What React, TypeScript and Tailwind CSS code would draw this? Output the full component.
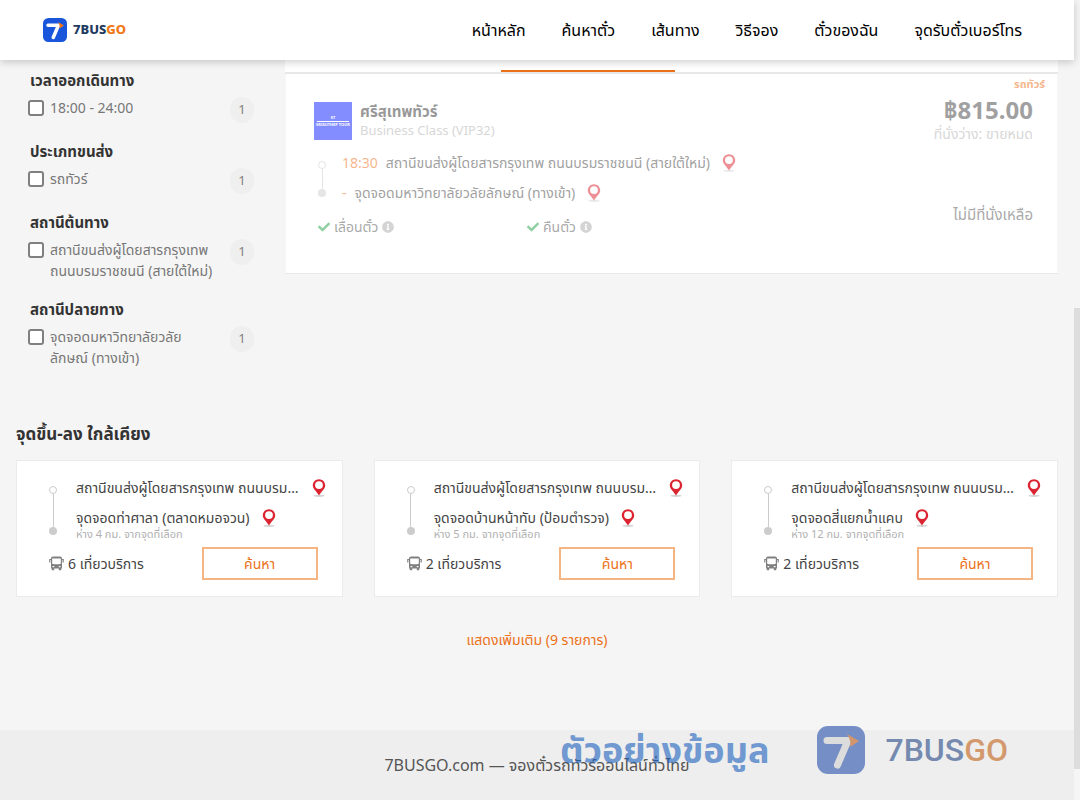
import { FaCheck, FaInfoCircle } from "react-icons/fa";

const NAV_ITEMS = ["หน้าหลัก", "ค้นหาตั๋ว", "เส้นทาง", "วิธีจอง", "ตั๋วของฉัน", "จุดรับตั๋วเบอร์โทร"];

const FILTERS = [
  { id: "time", title: "เวลาออกเดินทาง", label: "18:00 - 24:00", count: 1 },
  { id: "type", title: "ประเภทขนส่ง", label: "รถทัวร์", count: 1 },
  { id: "from", title: "สถานีต้นทาง", label: "สถานีขนส่งผู้โดยสารกรุงเทพ ถนนบรมราชชนนี (สายใต้ใหม่)", count: 1 },
  { id: "to", title: "สถานีปลายทาง", label: "จุดจอดมหาวิทยาลัยวลัยลักษณ์ (ทางเข้า)", count: 1 },
];

const ORIGIN = "สถานีขนส่งผู้โดยสารกรุงเทพ ถนนบรมราชชนนี (สายใต้ใหม่)";

const NEARBY = [
  { to: "จุดจอดท่าศาลา (ตลาดหมอจวน)", km: 4, trips: 6 },
  { to: "จุดจอดบ้านหน้าทับ (ป้อมตำรวจ)", km: 5, trips: 2 },
  { to: "จุดจอดสี่แยกน้ำแคบ", km: 12, trips: 2 },
];

function LogoMark({ className }: { className: string }) {
  return (
    <svg viewBox="0 0 48 48" className={className} aria-hidden="true">
      <rect width="48" height="48" rx="11" fill="#1a56db" />
      <path d="M10 14.500H31L20.500 39" fill="none" stroke="#fff" strokeWidth="7" strokeLinecap="round" strokeLinejoin="round" />
      <path d="M30 8l12 7-9 6c1-5 0-8-3-13z" fill="#f97316" />
    </svg>
  );
}

// same mark, toned down for the sample-data overlay
function FadedMark({ className }: { className: string }) {
  return (
    <svg viewBox="0 0 48 48" className={className} aria-hidden="true">
      <rect width="48" height="48" rx="11" fill="#758fc6" />
      <path d="M10 14.500H31L20.500 39" fill="none" stroke="#dcdcdc" strokeWidth="7" strokeLinecap="round" strokeLinejoin="round" />
      <path d="M30 8l12 7-9 6c1-5 0-8-3-13z" fill="#d3956c" />
    </svg>
  );
}

function Pin() {
  return (
    <svg viewBox="0 0 14 18" className="h-[18px] w-3.5 shrink-0" aria-hidden="true">
      <ellipse cx="7" cy="16.800" rx="5.500" ry="1.100" fill="#d4d4d4" />
      <path
        fillRule="evenodd"
        d="M7 0.200C3.500 0.200 0.800 3 0.800 6.400 0.800 9.900 4.600 12 7 16.600 9.400 12 13.200 9.900 13.200 6.400 13.200 3 10.500 0.200 7 0.200zM7 2.200a3.900 3.900 0 1 1 0 7.800 3.900 3.900 0 0 1 0-7.800z"
        fill="#dc2430"
      />
    </svg>
  );
}

function Bus() {
  return (
    <svg viewBox="0 0 15 15" className="h-[15px] w-[15px] shrink-0" aria-hidden="true">
      <path
        fillRule="evenodd"
        d="M4 0.500h7c1.200 0 2 .8 2 2V12.500h-.8v1.800h-2.400v-1.800H5.200v1.800H2.800v-1.800H2V2.500c0-1.200.8-2 2-2zM3.200 2.600v5.200c2 .7 6.600.7 8.600 0V2.600zM3.500 10v1.200h1.700V10zM9.800 10v1.200h1.700V10z"
        fill="#808080"
      />
      <path d="M2.200 3.500H.8V6.500M12.800 3.500h1.400V6.500" fill="none" stroke="#808080" strokeWidth="1.200" />
    </svg>
  );
}

function Timeline({ className }: { className: string }) {
  return (
    <div className={`flex w-2 shrink-0 flex-col items-center ${className}`}>
      <span className="size-2 rounded-full border border-[#cccccc] bg-white" />
      <span className="w-px flex-1 bg-[#cccccc]" />
      <span className="size-2 rounded-full bg-[#cccccc]" />
    </div>
  );
}

function Header() {
  return (
    <header className="relative z-10 flex h-[60px] items-center justify-between bg-white pr-[52px] pl-[43px] shadow-[0_2px_8px_rgba(0,0,0,0.2)]">
      <a href="#" className="flex items-center gap-1.5">
        <LogoMark className="size-6" />
        <span className="text-[13px] font-extrabold text-[#1e3a5f]">
          7BUS<span className="text-[#f07818]">GO</span>
        </span>
      </a>
      <nav className="flex gap-9 text-base leading-6 whitespace-nowrap text-black">
        {NAV_ITEMS.map((item) => (
          <a key={item} href="#">
            {item}
          </a>
        ))}
      </nav>
    </header>
  );
}

function Sidebar() {
  return (
    <aside className="flex w-[285px] shrink-0 flex-col gap-[17px] pt-2.5 pr-[31px] pl-7">
      {FILTERS.map((f) => (
        <section key={f.id}>
          <h3 className="pl-0.5 text-[15px] leading-5 font-bold text-[#333333]">{f.title}</h3>
          <div className="mt-[7px] flex min-h-[27px] items-start">
            <input
              id={f.id}
              type="checkbox"
              className="mt-[3px] size-4 shrink-0 appearance-none rounded-[3px] border-2 border-[#808080] bg-white"
            />
            <label htmlFor={f.id} className="ml-1.5 w-[168px] pb-px text-sm leading-[21px] text-[#777777]">
              {f.label}
            </label>
            <span className="ml-auto flex h-[26px] w-6 items-center justify-center rounded-full bg-[#efefef] text-[13px] text-[#808080]">
              {f.count}
            </span>
          </div>
        </section>
      ))}
    </aside>
  );
}

function TripCard() {
  return (
    <article className="mr-4 min-w-0 flex-1 border-b border-[#e8e8e8] bg-white">
      <div className="flex h-3 items-end">
        <span className="w-[28%]" />
        <span className="h-0.5 w-[22.5%] bg-[#ec7017]" />
      </div>
      <div className="h-0.5 bg-[#e8e8e8]" />
      <div className="border-x border-[#eeeeee] opacity-50">
        <p className="px-3 text-right text-[11px] leading-5 font-bold text-[#ec7017]">รถทัวร์</p>
        <div className="flex justify-between pr-6 pb-9 pl-7">
          <div className="pt-2">
            <div className="flex gap-2">
              <div className="flex size-[38px] flex-col items-center justify-center bg-[#0a1eff] text-[4px] leading-[6px] font-bold whitespace-nowrap text-white">
                <span>ST</span>
                <span className="h-px w-8 bg-white" />
                <span>SRISUTHEP TOUR</span>
              </div>
              <div className="leading-[19px]">
                <h2 className="text-[15px] font-bold text-[#333333]">ศรีสุเทพทัวร์</h2>
                <p className="text-[13px] text-[#b0b0b0]">Business Class (VIP32)</p>
              </div>
            </div>
            <div className="mt-[13px] flex pl-1">
              <Timeline className="mt-2 mb-1.5" />
              <div className="ml-4 flex flex-col gap-2.5 text-sm leading-5 text-[#444444]">
                <p className="flex items-center gap-2">
                  <span className="text-[#ec7017]">18:30</span>
                  <span className="mr-1">{ORIGIN}</span>
                  <Pin />
                </p>
                <p className="flex items-center gap-2">
                  <span className="text-[#ec7017]">-</span>
                  <span className="mr-1">จุดจอดมหาวิทยาลัยวลัยลักษณ์ (ทางเข้า)</span>
                  <Pin />
                </p>
              </div>
            </div>
            <ul className="mt-3.5 flex pl-1 text-sm leading-5 text-[#555555]">
              {["เลื่อนตั๋ว", "คืนตั๋ว"].map((perk) => (
                <li key={perk} className="flex w-[209px] items-center gap-1">
                  <FaCheck className="size-3 text-[#22a045]" />
                  {perk}
                  <FaInfoCircle className="size-3 text-[#aaaaaa]" />
                </li>
              ))}
            </ul>
          </div>
          <div className="shrink-0 text-right">
            <p className="text-2xl leading-8 font-bold text-[#444444]">฿815.00</p>
            <p className="text-sm leading-4 text-[#b0b0b0]">ที่นั่งว่าง: ขายหมด</p>
            <p className="mt-[62px] text-[15px] leading-5 text-[#555555]">ไม่มีที่นั่งเหลือ</p>
          </div>
        </div>
      </div>
    </article>
  );
}

function NearbyCard({ to, km, trips }: { to: string; km: number; trips: number }) {
  return (
    <article className="border border-[#ebebeb] bg-white pt-[17px] pr-4 pb-4 pl-8 text-sm text-[#444444]">
      <div className="flex">
        <Timeline className="mt-2 mb-[5px]" />
        <div className="ml-[19px] min-w-0 flex-1 leading-5">
          <div className="flex items-center justify-between gap-2.5">
            <span className="min-w-0 truncate">{ORIGIN}</span>
            <Pin />
          </div>
          <div className="mt-2.5 flex items-center gap-3">
            <span>{to}</span>
            <Pin />
          </div>
          <p className="text-[11px] leading-3 text-[#b0b0b0]">ห่าง {km} กม. จากจุดที่เลือก</p>
        </div>
      </div>
      <div className="mt-[7px] flex items-center justify-between pr-2">
        <span className="flex items-center gap-1">
          <Bus />
          {trips} เที่ยวบริการ
        </span>
        <button type="button" className="h-[33px] w-[116px] border-2 border-[#f5b583] text-[#ec7017]">
          ค้นหา
        </button>
      </div>
    </article>
  );
}

function Footer() {
  return (
    <footer className="relative flex-1 bg-[#eeeeee] pt-[25px] pb-6 text-center text-base leading-5 text-[#555555]">
      <p>7BUSGO.com — จองตั๋วรถทัวร์ออนไลน์ทั่วไทย</p>
      <div className="absolute -top-1 right-[66px] flex h-12 items-center">
        <span className="mr-12 text-4xl leading-[48px] font-bold whitespace-nowrap text-[#1c62bd] opacity-60">
          ตัวอย่างข้อมูล
        </span>
        <FadedMark className="size-12" />
        <span className="ml-5 font-[Roboto] text-[32px] leading-[48px] font-medium text-[#758aae]">
          7BUS<span className="text-[#d3996c]">GO</span>
        </span>
      </div>
    </footer>
  );
}

export default function App() {
  return (
    <div className="flex min-h-screen bg-[#f5f5f5] font-['Noto_Sans','Noto_Sans_Thai',sans-serif]">
      <div className="flex min-w-0 flex-1 flex-col">
        <Header />
        <main>
          <div className="flex items-start">
            <Sidebar />
            <TripCard />
          </div>
          <section className="px-4 pt-[53px]">
            <h2 className="text-[17px] leading-6 font-bold text-[#333333]">จุดขึ้น-ลง ใกล้เคียง</h2>
            <div className="mt-3.5 grid grid-cols-3 gap-[31px]">
              {NEARBY.map((n) => (
                <NearbyCard key={n.to} {...n} />
              ))}
            </div>
            <div className="pt-[30px] pb-[79px] text-center">
              <button type="button" className="text-sm leading-5 text-[#ec7017]">
                แสดงเพิ่มเติม (9 รายการ)
              </button>
            </div>
          </section>
        </main>
        <Footer />
      </div>
      <div className="flex w-1.5 shrink-0 flex-col bg-[#f5f5f5]" aria-hidden="true">
        <span className="flex-[308]" />
        <span className="flex-[461] bg-[#dddddd]" />
        <span className="flex-[31]" />
      </div>
    </div>
  );
}
